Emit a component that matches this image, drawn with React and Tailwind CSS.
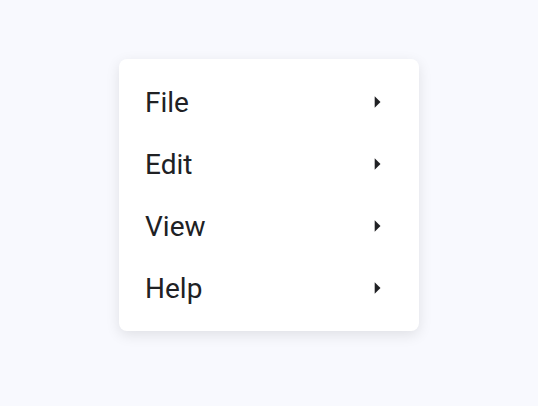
import React from "react";

const items = ["File", "Edit", "View", "Help"];

function Arrow() {
  return (
    <svg width="28" height="28" viewBox="0 0 24 24" className="text-[#202124]">
      <path d="M10 17l5-5-5-5v10z" fill="currentColor" />
    </svg>
  );
}

export default function App() {
  return (
    <div className="w-[538px] h-[406px] bg-[#f8f9fe] flex items-start justify-center pt-[59px]" style={{ fontFamily: "Roboto, sans-serif" }}>
      <div className="w-[300px] bg-white rounded-lg py-3 shadow-[0_4px_14px_rgba(0,0,0,0.1)]">
        {items.map((it) => (
          <div key={it} className="h-[62px] flex items-center justify-between pl-[26px] pr-[28px]">
            <span className="text-[28px] text-[#202124] leading-none pt-[2px]">{it}</span>
            <Arrow />
          </div>
        ))}
      </div>
    </div>
  );
}
